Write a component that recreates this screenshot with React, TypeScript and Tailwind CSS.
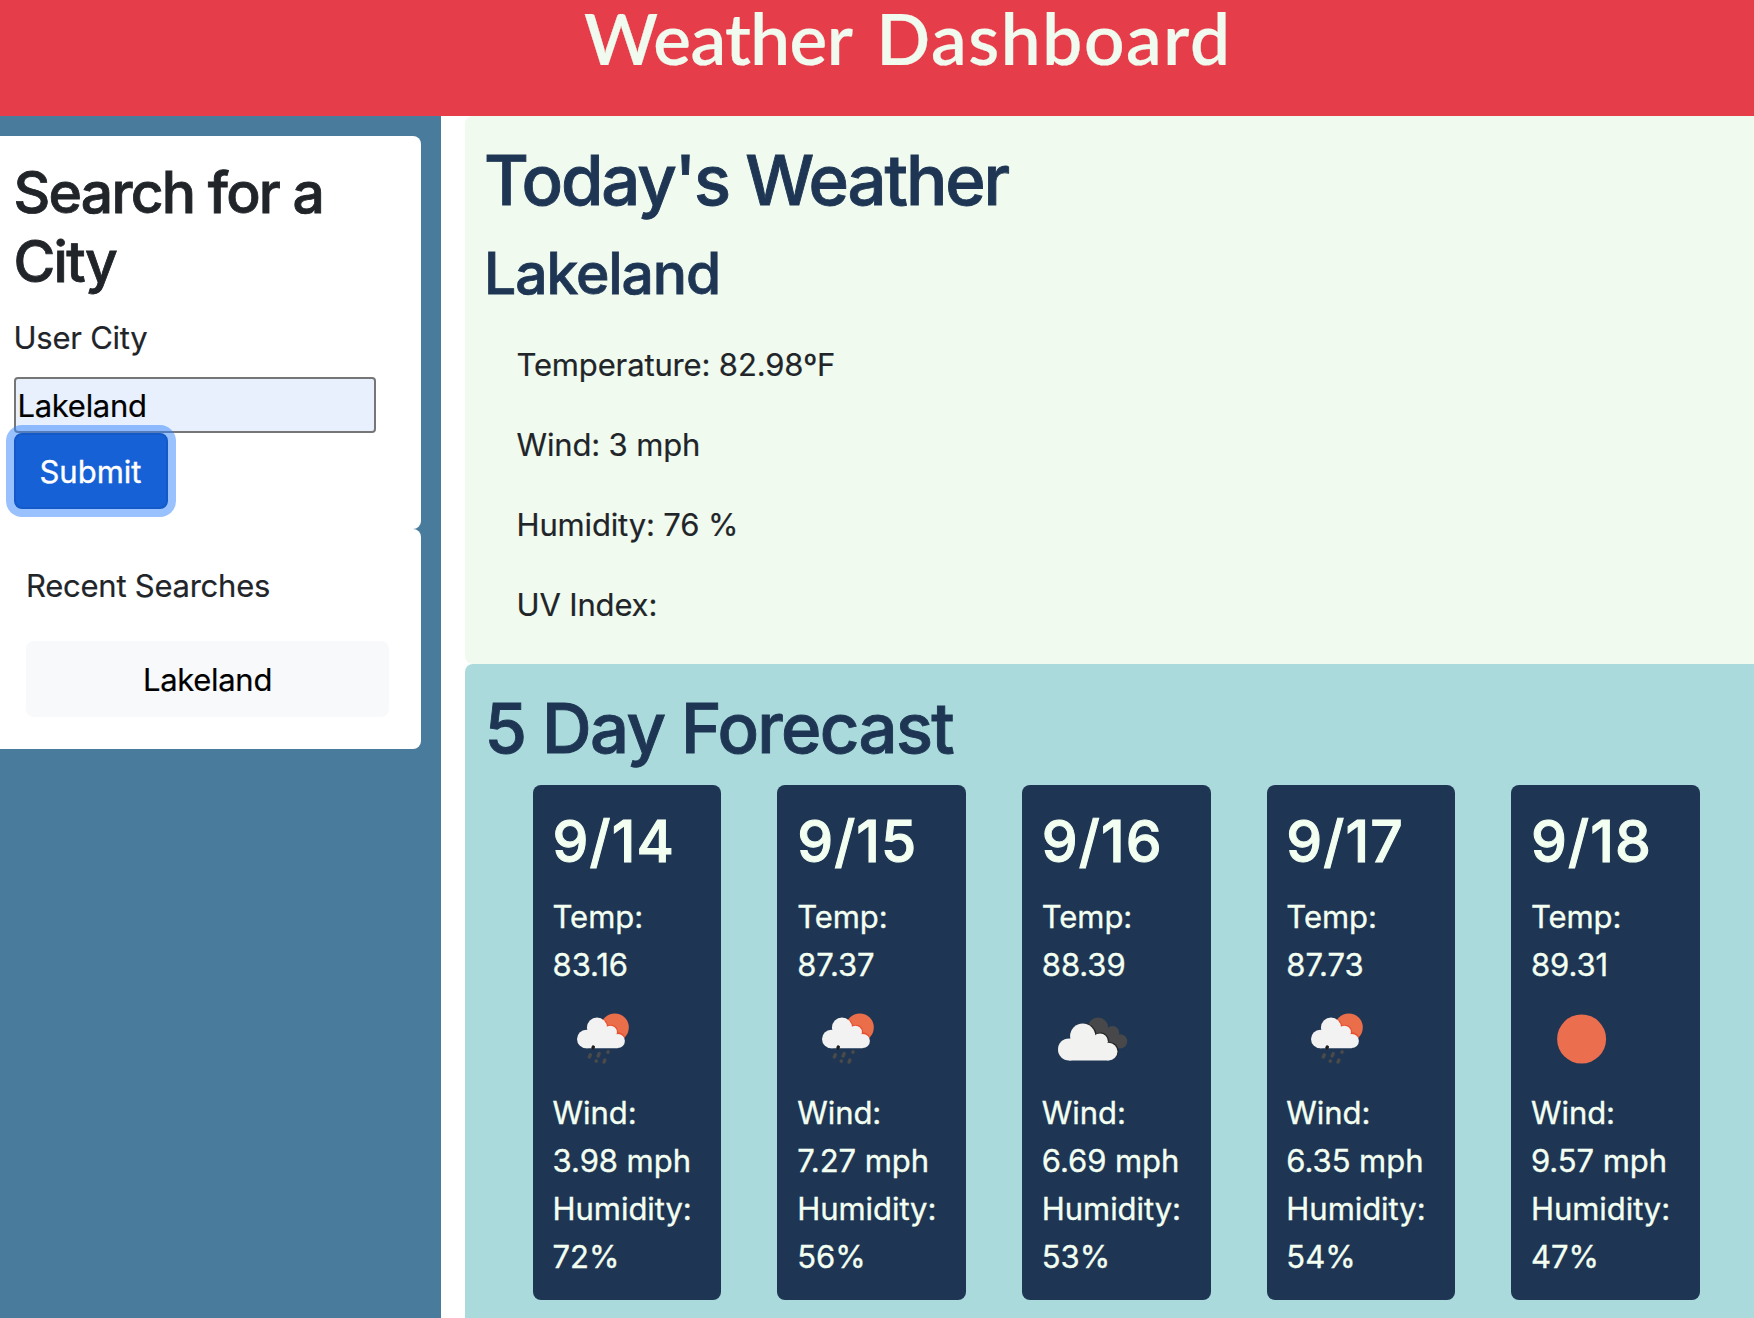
type Icon = 'rain' | 'clouds' | 'sun';

interface Day {
  date: string;
  temp: string;
  icon: Icon;
  wind: string;
  humidity: string;
}

const days: Day[] = [
  { date: '9/14', temp: '83.16', icon: 'rain', wind: '3.98', humidity: '72' },
  { date: '9/15', temp: '87.37', icon: 'rain', wind: '7.27', humidity: '56' },
  { date: '9/16', temp: '88.39', icon: 'clouds', wind: '6.69', humidity: '53' },
  { date: '9/17', temp: '87.73', icon: 'rain', wind: '6.35', humidity: '54' },
  { date: '9/18', temp: '89.31', icon: 'sun', wind: '9.57', humidity: '47' },
];

const today = ['Temperature: 82.98ºF', 'Wind: 3 mph', 'Humidity: 76 %', 'UV Index:'];

function RainIcon() {
  return (
    <svg viewBox="0 0 100 100" className="ml-[0.5px] size-[100px]">
      <clipPath id="rain-sun">
        <circle cx="61.8" cy="38.5" r="14" />
      </clipPath>
      <circle cx="61.8" cy="38.5" r="14" fill="#eb6e4b" />
      <g fill="#e8502f" clipPath="url(#rain-sun)">
        <circle cx="44.4" cy="38.6" r="10.9" />
        <circle cx="57.8" cy="43" r="7.3" />
        <circle cx="64.8" cy="51" r="7.8" />
      </g>
      <g fill="#f2f2f2">
        <circle cx="44" cy="38.7" r="10.1" />
        <circle cx="57.4" cy="43.2" r="6.5" />
        <circle cx="64.8" cy="52" r="7.1" />
        <circle cx="33.2" cy="50" r="9.2" />
        <path d="M33.2 42h24l7.6 5v12.2H33.2z" />
      </g>
      <g stroke="#4a4a4a" strokeWidth="3.4" strokeLinecap="round">
        <path d="M40.3 58l-.3.8" stroke="#1f1f1f" />
        <path d="M37.3 65.8l-1 2.1" />
        <path d="M46.2 64.6l-1.1 2.4" />
        <path d="M55.2 62.7l-.3.6" />
        <path d="M43.3 71.9l-.1.3" />
        <path d="M51.9 71l-.9 2.1" />
      </g>
    </svg>
  );
}

function CloudsIcon() {
  return (
    <svg viewBox="0 0 100 100" className="size-[100px]">
      <g fill="#48484a">
        <circle cx="56" cy="38.7" r="10.2" />
        <circle cx="70.5" cy="43.8" r="6.7" />
        <circle cx="78" cy="52.4" r="7.2" />
        <path d="M56 40h14l6 19H60z" />
      </g>
      <g fill="#222224">
        <circle cx="42" cy="46.8" r="12.6" />
        <circle cx="58.8" cy="51.6" r="8" />
        <circle cx="67.6" cy="61.8" r="8.9" />
      </g>
      <g fill="#f2f2f0">
        <circle cx="40.7" cy="47.2" r="12.6" />
        <circle cx="58" cy="52.3" r="7.9" />
        <circle cx="66.7" cy="62.6" r="8.8" />
        <circle cx="27" cy="60.4" r="11" />
        <path d="M27 50h29l10.7 7v14.4H27z" />
      </g>
    </svg>
  );
}

function SunIcon() {
  return (
    <svg viewBox="0 0 100 100" className="size-[100px]">
      <circle cx="50.6" cy="50" r="24.5" fill="#eb6e4f" />
    </svg>
  );
}

const icons = { rain: RainIcon, clouds: CloudsIcon, sun: SunIcon };

function ForecastCard({ day }: { day: Day }) {
  const WeatherIcon = icons[day.icon];
  return (
    <article className="h-[515px] w-[188.6px] shrink-0 rounded-lg bg-[#1e3654] pl-[19.7px] pt-[21.5px] tracking-[-0.05px] text-[#f3fff1] [-webkit-text-stroke:0.35px]">
      <h2 className="mb-4 text-[57px] font-medium leading-[70px] tracking-[1.1px] [-webkit-text-stroke:1px]">{day.date}</h2>
      <p>Temp:</p>
      <p>{day.temp}</p>
      <WeatherIcon />
      <p>Wind:</p>
      <p>{day.wind} mph</p>
      <p>Humidity:</p>
      <p>{day.humidity}%</p>
    </article>
  );
}

export default function App() {
  return (
    <div className="flex h-[1318px] w-full flex-col overflow-hidden bg-white font-[Inter,sans-serif] text-[31px] leading-[48px] text-[#212529] [-webkit-text-stroke:0.2px]">
      <header className="h-[116px] shrink-0 bg-[#e63d4b] pl-[584px] font-[Lato,sans-serif]">
        <h1 className="flex gap-[24px] text-[71px] font-semibold leading-[76px] text-[#f1faee]">
          <span className="-tracking-[0.6px]">Weather</span>
          <span className="tracking-[1.6px]">Dashboard</span>
        </h1>
      </header>

      <div className="flex min-h-0 flex-1">
        <aside className="w-[441px] shrink-0 bg-[#487b9c] pt-5">
          <section className="h-[392.7px] w-[421px] rounded-r-lg bg-white pl-[13.5px] pt-[21.5px]">
            <h2 className="mb-[17px] w-[380px] text-[57px] font-medium leading-[69.9px] tracking-[-1.75px] [-webkit-text-stroke:0.8px]">
              Search for a City
            </h2>
            <label htmlFor="city" className="mb-[15px] block tracking-[-0.25px]">
              User City
            </label>
            <input
              id="city"
              defaultValue="Lakeland"
              className="block h-14 w-[362px] rounded border-2 border-[#767676] bg-[#e8f0fe] px-0.5 tracking-[-0.3px] text-black outline-none"
            />
            <button className="block h-[76px] w-[154px] rounded-lg border-2 border-[#1459c8] bg-[#1761d6] pt-px text-white shadow-[0_0_0_8px_rgba(49,132,253,0.5)] [-webkit-text-stroke:0.35px]">
              Submit
            </button>
          </section>

          <section className="h-[220px] w-[421px] rounded-r-lg bg-white pl-[26px] pt-[33px]">
            <p className="mb-[31px] tracking-[-0.25px]">Recent Searches</p>
            <button className="block h-[76px] w-[363px] rounded-lg bg-[#f8f9fb] pt-0.5 tracking-[-0.3px] text-black">
              Lakeland
            </button>
          </section>
        </aside>

        <main className="ml-6 flex flex-1 flex-col">
          <section className="h-[548px] shrink-0 rounded-l-lg bg-[#f0faee] pl-[19px] pt-[22px]">
            <h1 className="mb-[17px] text-[68.8px] font-medium leading-[84.4px] tracking-[-2.1px] text-[#1e3654] [-webkit-text-stroke:0.9px]">
              Today's Weather
            </h1>
            <h2 className="mb-8 text-[57px] font-medium leading-[69.9px] tracking-[-1.1px] text-[#1e3654] [-webkit-text-stroke:0.8px]">
              Lakeland
            </h2>
            <div className="flex flex-col gap-8 pl-[32.5px] tracking-[-0.15px]">
              {today.map((line) => (
                <p key={line}>{line}</p>
              ))}
            </div>
          </section>

          <section className="flex-1 rounded-tl-lg bg-[#aadadb] pl-[19.5px] pt-[22px]">
            <h1 className="mb-[14.6px] text-[68.8px] font-medium leading-[84.4px] tracking-[-1.65px] text-[#1e3654] [-webkit-text-stroke:0.9px]">
              5 Day Forecast
            </h1>
            <div className="flex gap-[56px] pl-[48.4px]">
              {days.map((day) => (
                <ForecastCard key={day.date} day={day} />
              ))}
            </div>
          </section>
        </main>
      </div>
    </div>
  );
}
